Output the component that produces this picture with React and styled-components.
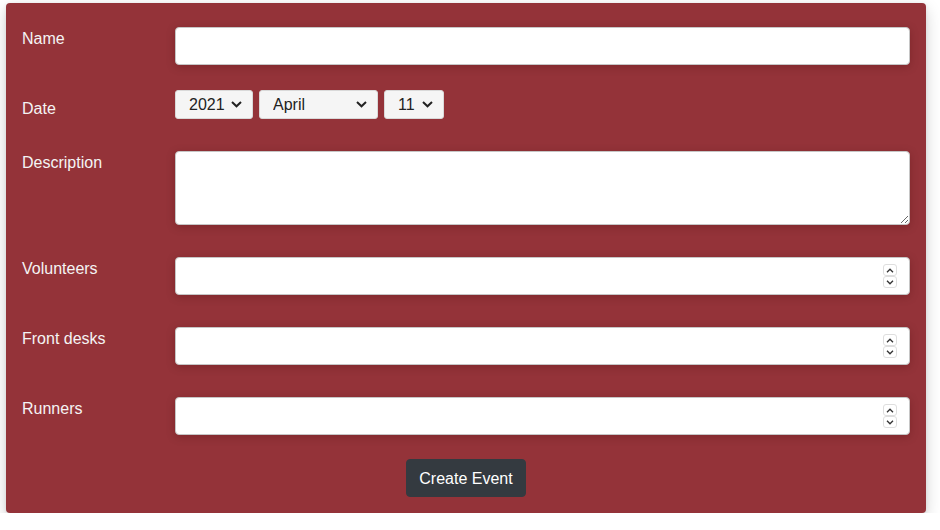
import React from "react";
import styled, { createGlobalStyle } from "styled-components";

const GlobalStyle = createGlobalStyle`
  html, body {
    margin: 0;
    padding: 0;
    background: #ffffff;
    font-family: "Liberation Sans", Arial, sans-serif;
  }
  * { box-sizing: border-box; }
`;

const Page = styled.div`
  padding: 3px 0 0 6px;
`;

const Card = styled.form`
  width: 920px;
  background: #943339;
  border-radius: 4px;
  box-shadow: 0 6px 16px rgba(0, 0, 0, 0.18), 0 1px 4px rgba(0, 0, 0, 0.08);
  padding: 24px 16px 16px;
  display: flex;
  flex-direction: column;
`;

const Row = styled.div`
  display: grid;
  grid-template-columns: 153px 1fr;
  align-items: start;
  margin-bottom: ${(p) => p.$space}px;
`;

const Label = styled.label`
  color: #f4f4f4;
  font-size: 16px;
  line-height: 22px;
  padding-top: ${(p) => p.$offset || 1}px;
`;

const fieldBase = `
  width: 100%;
  background: #ffffff;
  border: 1px solid #c6c6c6;
  border-radius: 4px;
  box-shadow: 0 2px 8px rgba(60, 0, 0, 0.25);
  font-family: "Liberation Sans", Arial, sans-serif;
  font-size: 16px;
  color: #222;
  outline: none;
`;

const TextInput = styled.input`
  ${fieldBase}
  display: block;
  height: 38px;
  padding: 6px 12px;
`;

const TextArea = styled.textarea`
  ${fieldBase}
  display: block;
  height: 74px;
  padding: 6px 12px;
  resize: vertical;
`;

const NumberWrap = styled.div`
  position: relative;
`;

const NumberInput = styled.input`
  ${fieldBase}
  display: block;
  height: 38px;
  padding: 6px 40px 6px 12px;
  -moz-appearance: textfield;
  &::-webkit-inner-spin-button,
  &::-webkit-outer-spin-button {
    -webkit-appearance: none;
    margin: 0;
  }
`;

const Spinner = styled.div`
  position: absolute;
  right: 13px;
  top: 7px;
  display: flex;
  flex-direction: column;
  gap: 0;
  pointer-events: none;
`;

const SpinBox = styled.span`
  width: 14px;
  height: 12px;
  border: 1px solid #dedede;
  border-radius: 3px;
  display: flex;
  align-items: center;
  justify-content: center;
  background: #fff;
`;

const DateRow = styled.div`
  display: flex;
  gap: 6px;
`;

const SelectWrap = styled.div`
  position: relative;
  width: ${(p) => p.$w}px;
`;

const Select = styled.select`
  appearance: none;
  -webkit-appearance: none;
  width: 100%;
  height: 29px;
  padding: 0 24px 0 13px;
  background: #f5f5f5;
  border: 1px solid #d9d9d9;
  border-radius: 3px;
  font-family: "Liberation Sans", Arial, sans-serif;
  font-size: 16px;
  color: #222;
  outline: none;
`;

const Chevron = styled.svg`
  position: absolute;
  right: 11px;
  top: 10px;
  pointer-events: none;
`;

const ButtonRow = styled.div`
  display: flex;
  justify-content: center;
`;

const Button = styled.button`
  height: 38px;
  width: 120px;
  padding: 7px 12px 5px;
  background: #343a40;
  color: #ffffff;
  border: 1px solid #343a40;
  border-radius: 4px;
  font-family: "Liberation Sans", Arial, sans-serif;
  font-size: 16px;
  line-height: 24px;
  cursor: pointer;
`;

const Down = () => (
  <Chevron width="11" height="8" viewBox="0 0 11 8">
    <path d="M1 2 L5.5 6.3 L10 2" fill="none" stroke="#222" strokeWidth="2" />
  </Chevron>
);

const SmallChev = ({ up }) => (
  <svg width="8" height="5" viewBox="0 0 8 5">
    <path
      d={up ? "M1 4.2 L4 1.2 L7 4.2" : "M1 0.8 L4 3.8 L7 0.8"}
      fill="none"
      stroke="#333"
      strokeWidth="1.3"
    />
  </svg>
);

const NumberField = ({ id }) => (
  <NumberWrap>
    <NumberInput id={id} type="number" />
    <Spinner>
      <SpinBox>
        <SmallChev up />
      </SpinBox>
      <SpinBox>
        <SmallChev />
      </SpinBox>
    </Spinner>
  </NumberWrap>
);

const months = [
  "January", "February", "March", "April", "May", "June",
  "July", "August", "September", "October", "November", "December",
];

export default function App() {
  return (
    <>
      <GlobalStyle />
      <Page>
        <Card onSubmit={(e) => e.preventDefault()}>
          <Row $space={25}>
            <Label htmlFor="name">Name</Label>
            <TextInput id="name" type="text" />
          </Row>
          <Row $space={31}>
            <Label $offset={8}>Date</Label>
            <DateRow>
              <SelectWrap $w={78}>
                <Select defaultValue="2021">
                  <option>2020</option>
                  <option>2021</option>
                  <option>2022</option>
                </Select>
                <Down />
              </SelectWrap>
              <SelectWrap $w={119}>
                <Select defaultValue="April">
                  {months.map((m) => (
                    <option key={m}>{m}</option>
                  ))}
                </Select>
                <Down />
              </SelectWrap>
              <SelectWrap $w={60}>
                <Select defaultValue="11">
                  {Array.from({ length: 31 }, (_, i) => (
                    <option key={i}>{i + 1}</option>
                  ))}
                </Select>
                <Down />
              </SelectWrap>
            </DateRow>
          </Row>
          <Row $space={32}>
            <Label htmlFor="desc">Description</Label>
            <TextArea id="desc" />
          </Row>
          <Row $space={32}>
            <Label htmlFor="vol">Volunteers</Label>
            <NumberField id="vol" />
          </Row>
          <Row $space={32}>
            <Label htmlFor="fd">Front desks</Label>
            <NumberField id="fd" />
          </Row>
          <Row $space={24}>
            <Label htmlFor="run">Runners</Label>
            <NumberField id="run" />
          </Row>
          <ButtonRow>
            <Button type="submit">Create Event</Button>
          </ButtonRow>
        </Card>
      </Page>
    </>
  );
}
